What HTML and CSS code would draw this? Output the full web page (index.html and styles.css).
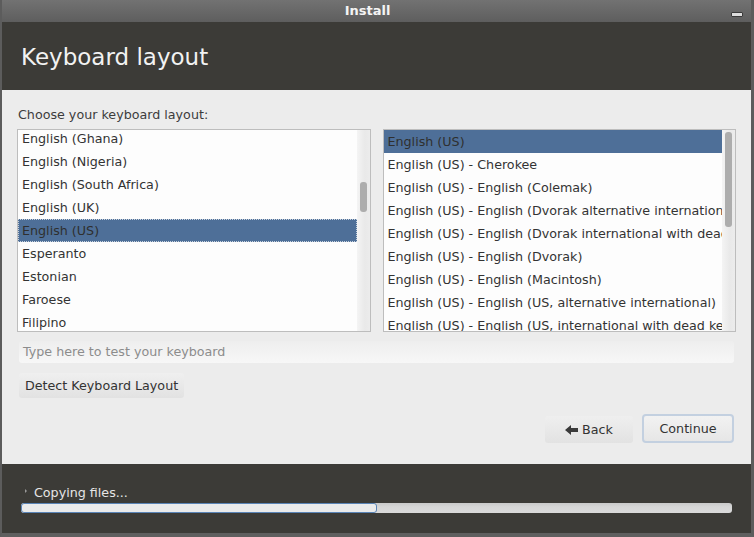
FILE: index.html
```html
<!DOCTYPE html>
<html>
<head>
<meta charset="utf-8">
<link rel="stylesheet" href="styles.css">
</head>
<body>
<div class="window">
  <div class="titlebar">
    <span class="title">Install</span>
    <span class="min-btn"></span>
  </div>
  <div class="header">
    <h1 class="heading">Keyboard layout</h1>
  </div>
  <div class="content">
    <div class="label">Choose your keyboard layout:</div>
    <div class="lists">
      <div class="list">
        <div class="rows rows-left">
          <div class="row">English (Ghana)</div>
          <div class="row">English (Nigeria)</div>
          <div class="row">English (South Africa)</div>
          <div class="row">English (UK)</div>
          <div class="row selected focused">English (US)</div>
          <div class="row">Esperanto</div>
          <div class="row">Estonian</div>
          <div class="row">Faroese</div>
          <div class="row">Filipino</div>
        </div>
        <div class="scrollbar"><div class="thumb thumb-left"></div></div>
      </div>
      <div class="list">
        <div class="rows">
          <div class="row selected">English (US)</div>
          <div class="row">English (US) - Cherokee</div>
          <div class="row">English (US) - English (Colemak)</div>
          <div class="row">English (US) - English (Dvorak alternative international no dead keys)</div>
          <div class="row">English (US) - English (Dvorak international with dead keys)</div>
          <div class="row">English (US) - English (Dvorak)</div>
          <div class="row">English (US) - English (Macintosh)</div>
          <div class="row">English (US) - English (US, alternative international)</div>
          <div class="row">English (US) - English (US, international with dead keys)</div>
        </div>
        <div class="scrollbar"><div class="thumb thumb-right"></div></div>
      </div>
    </div>
    <div class="entry">Type here to test your keyboard</div>
    <div class="detect-row"><span class="btn detect">Detect Keyboard Layout</span></div>
    <div class="nav">
      <span class="btn back"><svg class="arrow" width="14" height="10" viewBox="0 0 14 10"><polygon points="0,5 6,0 6,3 13,3 13,7 6,7 6,10" fill="#3a3a3a"/></svg>Back</span>
      <span class="btn continue">Continue</span>
    </div>
  </div>
  <div class="footer">
    <div class="status"><span class="tri"></span>Copying files...</div>
    <div class="progress"><div class="progress-fill"></div></div>
  </div>
</div>
</body>
</html>
```
FILE: styles.css
```css
html, body {
  margin: 0;
  padding: 0;
}
body {
  width: 754px;
  height: 537px;
  overflow: hidden;
  background: #5f5f5f;
  font-family: "DejaVu Sans", "Liberation Sans", sans-serif;
  font-size: 12.7px;
  color: #3c3c3c;
}
.window {
  width: 754px;
  height: 537px;
  display: flex;
  flex-direction: column;
  box-sizing: border-box;
  border-left: 2px solid #5c5c5c;
  border-right: 3px solid #5c5c5c;
  border-bottom: 4px solid #5f5f5f;
}
.titlebar {
  height: 22px;
  flex: none;
  background: linear-gradient(#727272, #5e5e5e);
  display: flex;
  align-items: center;
  justify-content: center;
  position: relative;
  padding-right: 18px;
}
.title {
  color: #f4f4f4;
  font-weight: bold;
  font-size: 13px;
  line-height: 22px;
}
.min-btn {
  position: absolute;
  left: 729px;
  top: 12px;
  width: 10px;
  height: 3px;
  background: #dcdcdc;
  border: 1px solid #3a3a3a;
  border-radius: 1px;
}
.header {
  height: 68px;
  flex: none;
  background: #3c3b37;
  display: flex;
  align-items: center;
  padding-left: 19px;
}
.heading {
  margin: 0;
  font-weight: normal;
  font-size: 23px;
  color: #f2f2f2;
  padding-top: 1px;
}
.content {
  flex: 1;
  background: #ececec;
  display: flex;
  flex-direction: column;
  padding: 16px 15px 21px 15px;
}
.label {
  line-height: 17px;
  margin-bottom: 6px;
  padding-left: 1px;
}
.lists {
  display: flex;
  gap: 12px;
}
.list {
  flex: 1;
  height: 203px;
  box-sizing: border-box;
  border: 1px solid #bdbdbd;
  background: #fdfdfd;
  display: flex;
  overflow: hidden;
}
.rows {
  flex: 1;
  min-width: 0;
}
.rows-left {
  margin-top: -3px;
}
.row {
  height: 23px;
  line-height: 23px;
  padding-left: 4px;
  white-space: nowrap;
  overflow: hidden;
  color: #333333;
}
.selected {
  background: #4e6f98;
  color: #2f2f2f;
}
.focused {
  outline: 1px dotted #c8d2de;
  outline-offset: -1px;
}
.scrollbar {
  width: 13px;
  flex: none;
  background: linear-gradient(90deg, #f4f4f4, #e9e9e9 60%, #ececec);
  position: relative;
}
.thumb {
  position: absolute;
  left: 3px;
  width: 7px;
  background: #adadad;
  border-radius: 3px;
}
.thumb-left {
  top: 52px;
  height: 30px;
}
.thumb-right {
  top: 2px;
  height: 95px;
}
.entry {
  margin: 9px 2px 0 2px;
  height: 22px;
  line-height: 22px;
  padding-left: 4px;
  background: linear-gradient(#eeeeee, #f7f7f7);
  border-radius: 3px;
  color: #8c8c8c;
}
.detect-row {
  display: flex;
  margin-top: 10px;
  padding-left: 2px;
}
.btn {
  display: inline-flex;
  align-items: center;
  box-sizing: border-box;
  border-radius: 3px;
  background: linear-gradient(#efefef, #e2e2e2);
  color: #333333;
  white-space: nowrap;
}
.detect {
  height: 25px;
  padding: 0 6px;
}
.nav {
  margin-top: auto;
  display: flex;
  justify-content: flex-end;
  align-items: flex-end;
  gap: 9px;
  padding-right: 2px;
}
.back {
  width: 88px;
  height: 27px;
  justify-content: center;
  gap: 3px;
}
.arrow {
  display: block;
}
.continue {
  width: 92px;
  height: 29px;
  justify-content: center;
  border: 2px solid #c3d0e0;
  border-radius: 4px;
  background: linear-gradient(#f2f2f2, #e6e6e6);
}
.footer {
  height: 69px;
  flex: none;
  background: #3c3b37;
  padding: 20px 19px 0 19px;
  box-sizing: border-box;
}
.status {
  color: #e6e6e6;
  line-height: 17px;
  display: flex;
  align-items: center;
  padding-left: 4px;
}
.tri {
  width: 0;
  height: 0;
  border-top: 2px solid transparent;
  border-bottom: 2px solid transparent;
  border-left: 2px solid #9a9a9a;
  margin-right: 7px;
  margin-bottom: 3px;
}
.progress {
  margin-top: 2px;
  height: 10px;
  width: 711px;
  border-radius: 3px;
  background: linear-gradient(#c9c9c9, #d6d6d6 40%, #dadada);
  display: flex;
}
.progress-fill {
  width: 356px;
  height: 10px;
  box-sizing: border-box;
  border: 1px solid #5a84b6;
  border-radius: 3px;
  background: #ebebeb;
}
```
